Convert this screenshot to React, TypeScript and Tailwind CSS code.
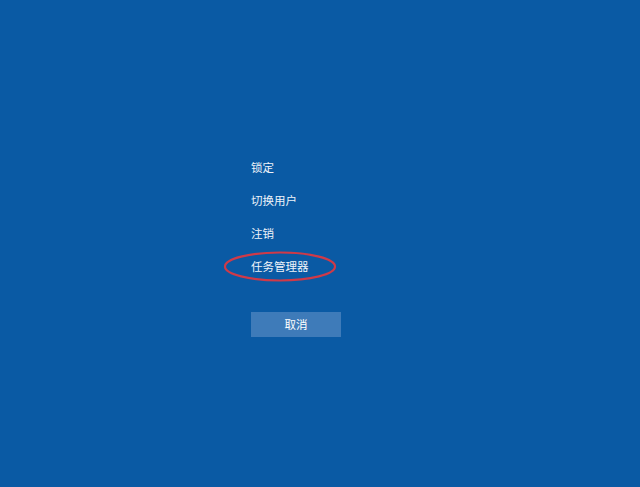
export default function App() {
  const items = ["锁定", "切换用户", "注销", "任务管理器"];
  return (
    <div
      className="relative w-[640px] h-[487px] bg-[#0a5aa4] overflow-hidden"
      style={{ fontFamily: '"Microsoft YaHei", "Noto Sans CJK SC", sans-serif' }}
    >
      <div className="flex flex-col pl-[251px] pt-[151px]">
        {items.map((t) => (
          <div
            key={t}
            className="h-[33px] flex items-center text-[11.5px] text-[#eef3f9] leading-none"
          >
            {t}
          </div>
        ))}
        <div className="mt-[29px] w-[90px] h-[25px] bg-[#3e7bb9] flex items-center justify-center text-[11.5px] text-white leading-none">
          取消
        </div>
      </div>
      <svg
        className="absolute left-[223px] top-[251px]"
        width="114"
        height="31"
        viewBox="0 0 114 31"
      >
        <ellipse cx="57" cy="15.5" rx="55" ry="14" fill="none" stroke="#cf3a48" strokeWidth="2.2" />
      </svg>
    </div>
  );
}
